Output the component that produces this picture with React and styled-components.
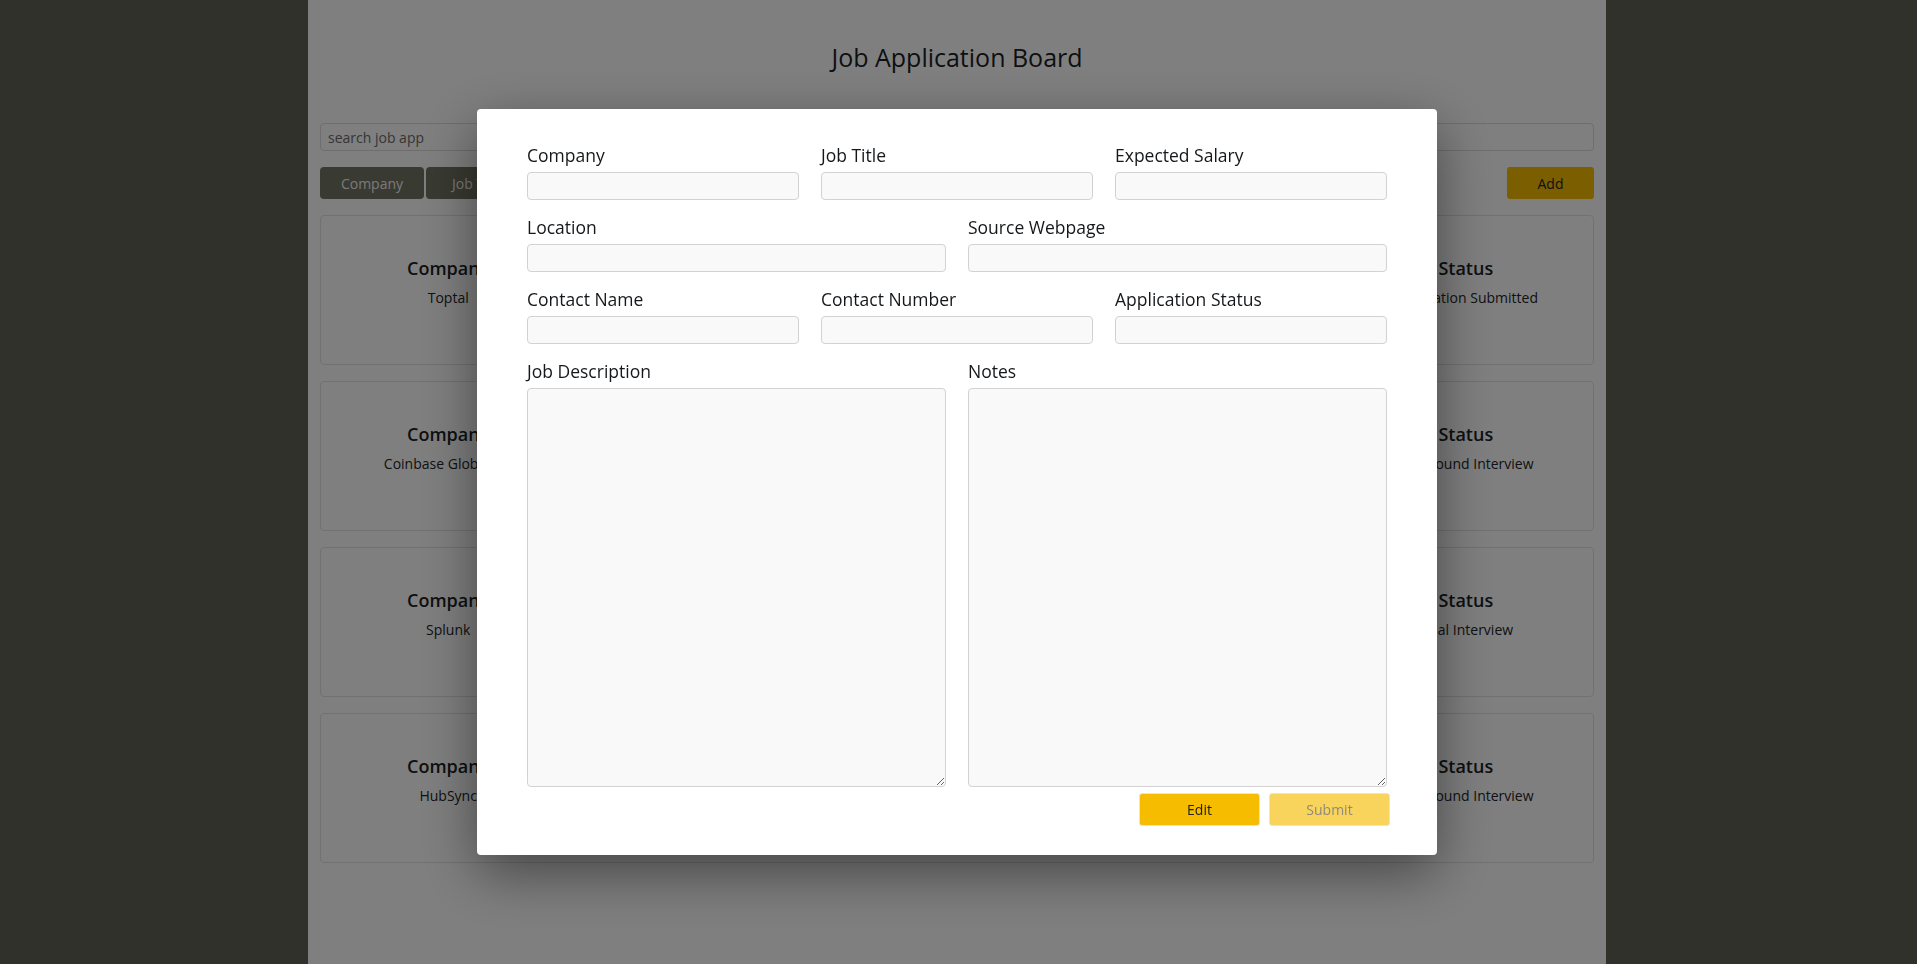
import React from "react";
import styled, { createGlobalStyle } from "styled-components";

const GlobalStyle = createGlobalStyle`
  html, body { margin: 0; padding: 0; }
  body {
    background: #606254;
    font-family: "Segoe UI", "Open Sans", "Noto Sans", sans-serif;
    color: #212529;
    padding-right: 3px;
  }
  * { box-sizing: border-box; }
`;

const Page = styled.div`
  width: 1298px;
  min-height: 100vh;
  margin: 0 auto;
  background: #ffffff;
  padding: 41px 12px 40px 12px;
`;

const Title = styled.h1`
  margin: 0 0 50px;
  text-align: center;
  font-size: 25px;
  line-height: 32px;
  font-weight: 500;
  color: #1c1f23;
`;

const Search = styled.input`
  display: block;
  width: 100%;
  height: 28px;
  padding: 0 7px;
  border: 1px solid #dcdcdc;
  border-radius: 4px;
  font-family: inherit;
  font-size: 14px;
  color: #333;
  background: #fff;
  &::placeholder { color: #6c6c6c; }
`;

const Toolbar = styled.div`
  display: flex;
  align-items: center;
  gap: 2px;
  margin-top: 16px;
`;

const SortButton = styled.button`
  width: 104px;
  height: 32px;
  border: none;
  border-radius: 4px;
  background: #727462;
  color: #f2f2f2;
  font-family: inherit;
  font-size: 14px;
`;

const AddButton = styled.button`
  margin-left: auto;
  width: 87px;
  height: 32px;
  border: none;
  border-radius: 3px;
  background: #f5bc00;
  color: #222;
  font-family: inherit;
  font-size: 14px;
`;

const CardList = styled.div`
  display: flex;
  flex-direction: column;
  gap: 16px;
  margin-top: 16px;
`;

const Card = styled.div`
  height: 150px;
  border: 1px solid #e2e2e2;
  border-radius: 4px;
  display: grid;
  grid-template-columns: repeat(5, 1fr);
  padding-top: 40px;
`;

const CardCol = styled.div`
  text-align: center;
`;

const CardHead = styled.div`
  font-size: 18px;
  line-height: 24px;
  font-weight: 600;
  color: #1c1f23;
`;

const CardValue = styled.div`
  margin-top: 8px;
  font-size: 14px;
  line-height: 20px;
  color: #212529;
`;

const Overlay = styled.div`
  position: fixed;
  inset: 0;
  padding-right: 3px;
  background: rgba(0, 0, 0, 0.5);
  display: flex;
  align-items: center;
  justify-content: center;
`;

const Modal = styled.div`
  width: 960px;
  background: #fff;
  border-radius: 4px;
  padding: 32px 50px 29px;
  box-shadow: 0 18px 55px rgba(0, 0, 0, 0.45);
`;

const Row = styled.div`
  display: grid;
  grid-template-columns: repeat(${(p) => p.$cols}, 1fr);
  column-gap: 22px;
  margin-bottom: 13px;
`;

const Field = styled.div`
  display: flex;
  flex-direction: column;
`;

const Label = styled.label`
  display: block;
  font-size: 17.5px;
  line-height: 29px;
  font-weight: 500;
  color: #15181b;
  margin-bottom: 2px;
`;

const Input = styled.input`
  height: 28px;
  width: 100%;
  border: 1px solid #d2d2d2;
  border-radius: 4px;
  background: #f9f9f9;
  font-family: inherit;
  font-size: 14px;
  padding: 0 6px;
`;

const TextArea = styled.textarea`
  height: 399px;
  width: 100%;
  border: 1px solid #d2d2d2;
  border-radius: 4px;
  background: #f9f9f9;
  font-family: inherit;
  font-size: 14px;
  padding: 6px;
`;

const Actions = styled.div`
  display: flex;
  justify-content: flex-end;
  gap: 9px;
  margin-top: -7px;
  margin-right: -3px;
`;

const ActionButton = styled.button`
  width: 121px;
  height: 33px;
  border: 1px solid #e4e4e4;
  border-radius: 3px;
  background: ${(p) => (p.disabled ? "#f9d45c" : "#f5bc00")};
  color: ${(p) => (p.disabled ? "#8f8a7a" : "#222")};
  font-family: inherit;
  font-size: 14px;
`;

const jobs = [
  { company: "Toptal", title: "Software Engineer", location: "Remote", salary: "$120,000", status: "Application Submitted" },
  { company: "Coinbase Global Inc", title: "Frontend Engineer", location: "Remote", salary: "$150,000", status: "2nd Round Interview" },
  { company: "Splunk", title: "Full Stack Developer", location: "San Francisco", salary: "$135,000", status: "Final Interview" },
  { company: "HubSync", title: "React Developer", location: "Remote", salary: "$110,000", status: "2nd Round Interview" },
];

export default function App() {
  return (
    <>
      <GlobalStyle />
      <Page>
        <Title>Job Application Board</Title>
        <Search placeholder="search job app" />
        <Toolbar>
          <SortButton>Company</SortButton>
          <SortButton>Job Title</SortButton>
          <SortButton>Location</SortButton>
          <SortButton>Status</SortButton>
          <AddButton>Add</AddButton>
        </Toolbar>
        <CardList>
          {jobs.map((j) => (
            <Card key={j.company}>
              <CardCol>
                <CardHead>Company</CardHead>
                <CardValue>{j.company}</CardValue>
              </CardCol>
              <CardCol>
                <CardHead>Job Title</CardHead>
                <CardValue>{j.title}</CardValue>
              </CardCol>
              <CardCol>
                <CardHead>Location</CardHead>
                <CardValue>{j.location}</CardValue>
              </CardCol>
              <CardCol>
                <CardHead>Salary</CardHead>
                <CardValue>{j.salary}</CardValue>
              </CardCol>
              <CardCol>
                <CardHead>Status</CardHead>
                <CardValue>{j.status}</CardValue>
              </CardCol>
            </Card>
          ))}
        </CardList>
      </Page>
      <Overlay>
        <Modal>
          <Row $cols={3}>
            <Field>
              <Label>Company</Label>
              <Input />
            </Field>
            <Field>
              <Label>Job Title</Label>
              <Input />
            </Field>
            <Field>
              <Label>Expected Salary</Label>
              <Input />
            </Field>
          </Row>
          <Row $cols={2}>
            <Field>
              <Label>Location</Label>
              <Input />
            </Field>
            <Field>
              <Label>Source Webpage</Label>
              <Input />
            </Field>
          </Row>
          <Row $cols={3}>
            <Field>
              <Label>Contact Name</Label>
              <Input />
            </Field>
            <Field>
              <Label>Contact Number</Label>
              <Input />
            </Field>
            <Field>
              <Label>Application Status</Label>
              <Input />
            </Field>
          </Row>
          <Row $cols={2}>
            <Field>
              <Label>Job Description</Label>
              <TextArea />
            </Field>
            <Field>
              <Label>Notes</Label>
              <TextArea />
            </Field>
          </Row>
          <Actions>
            <ActionButton>Edit</ActionButton>
            <ActionButton disabled>Submit</ActionButton>
          </Actions>
        </Modal>
      </Overlay>
    </>
  );
}
